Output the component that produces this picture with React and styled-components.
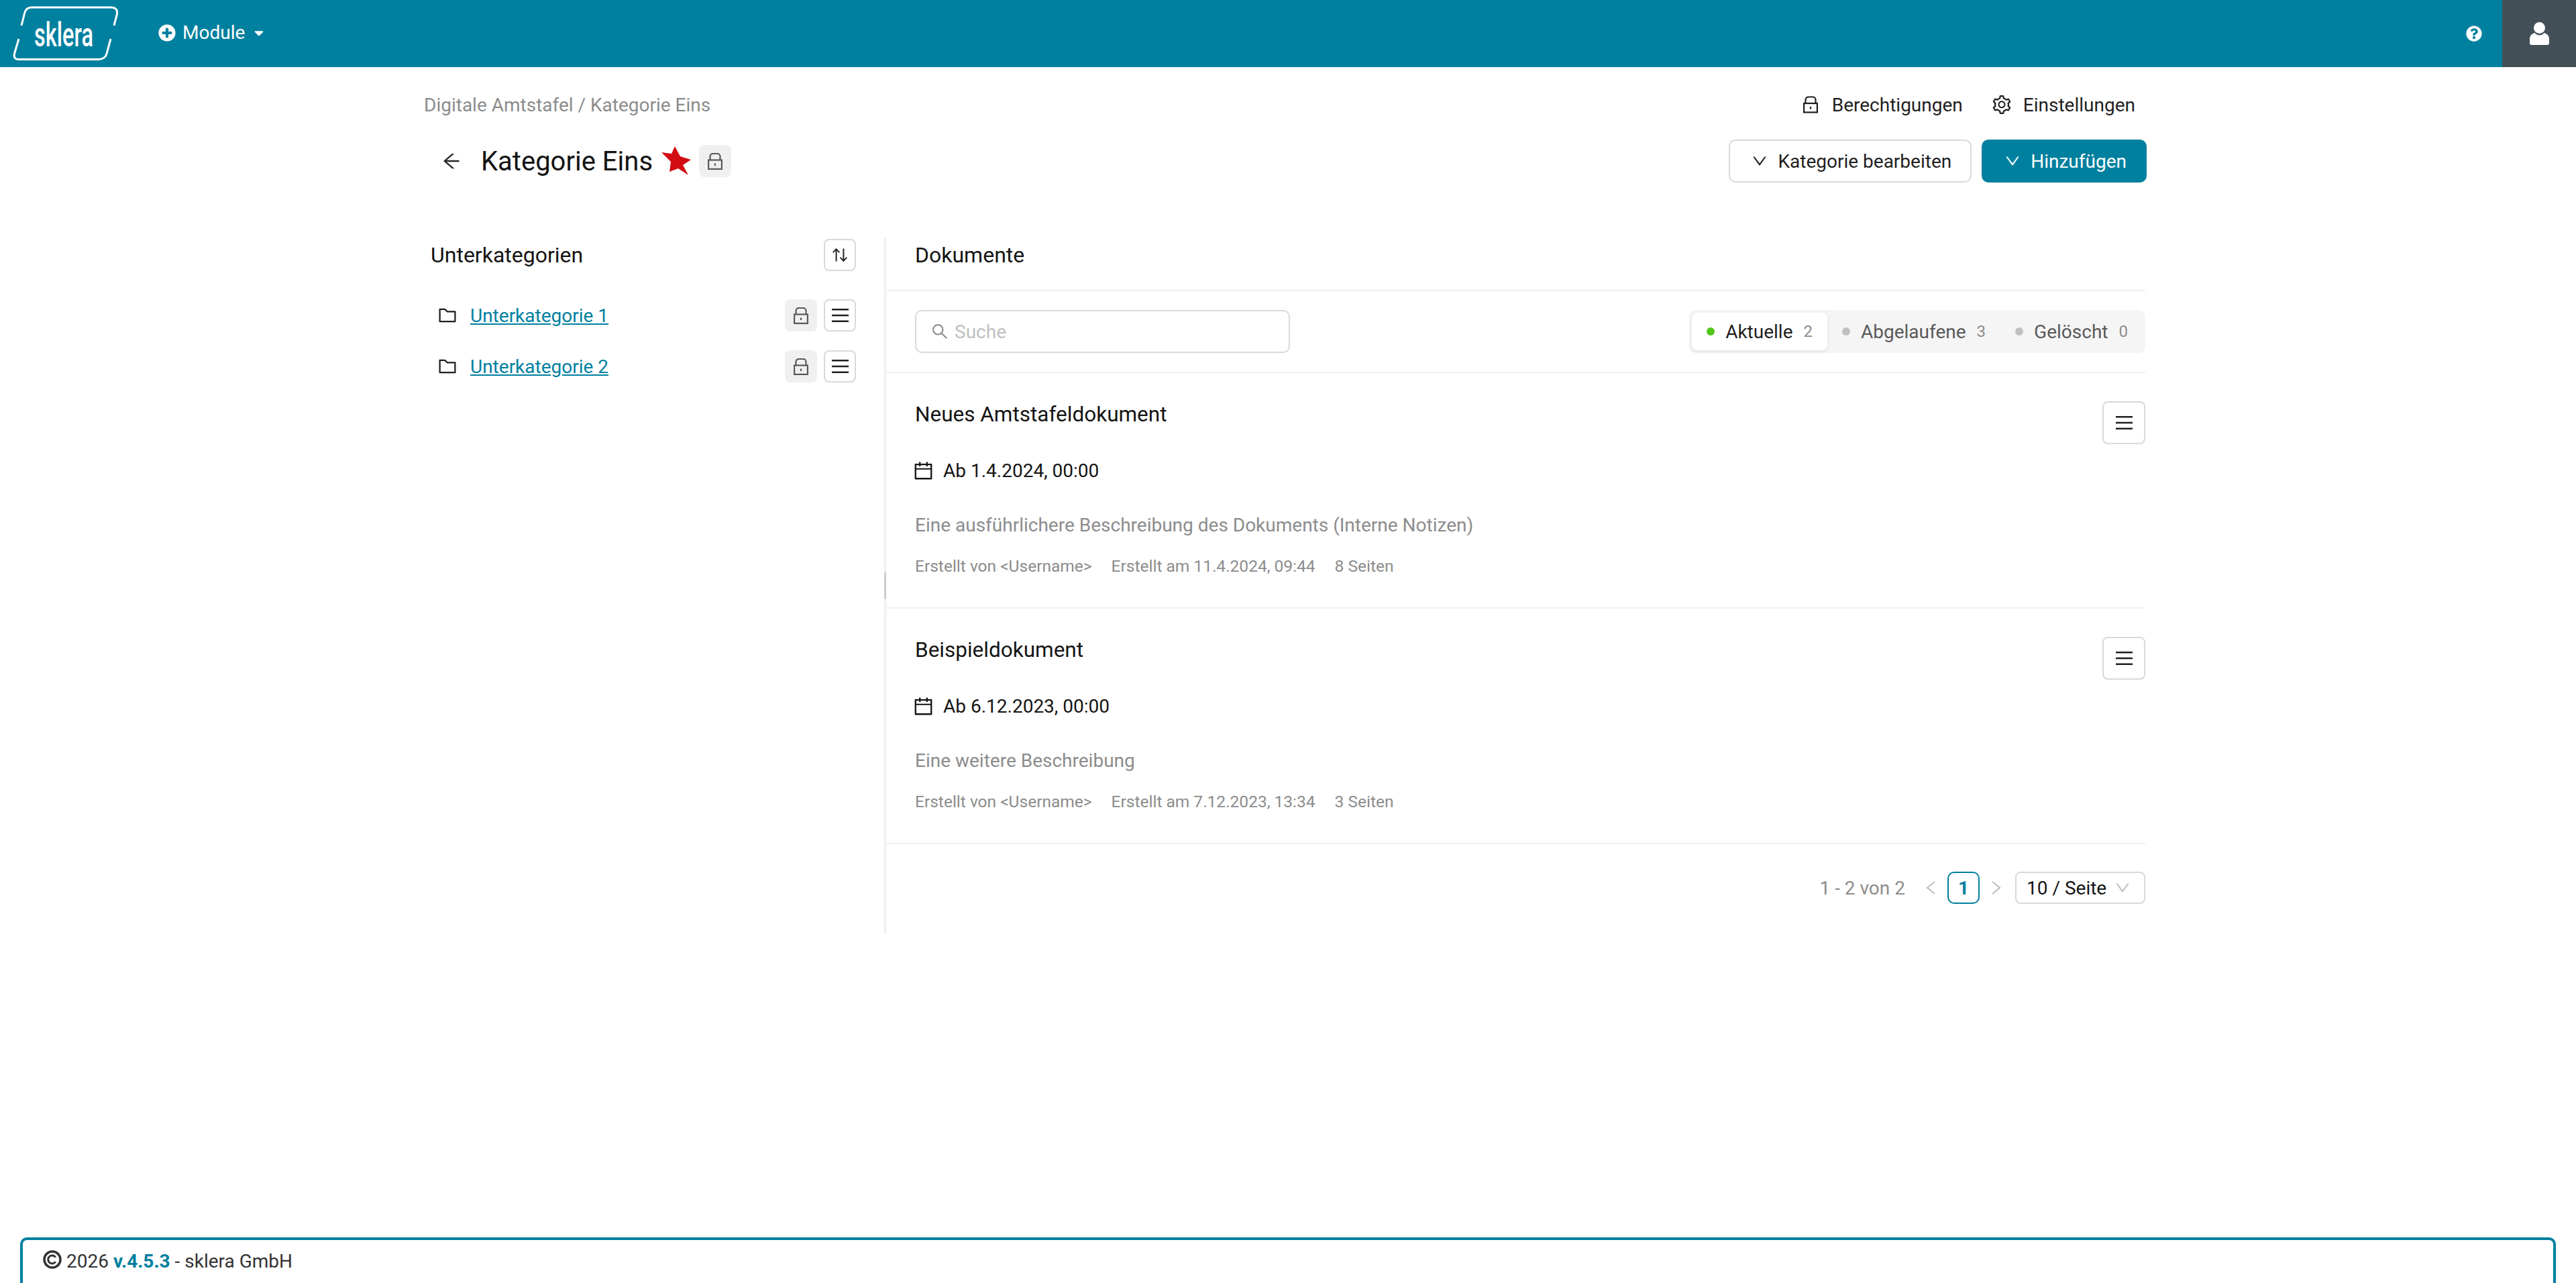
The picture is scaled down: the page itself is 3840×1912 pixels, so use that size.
import React from "react";
import styled, { createGlobalStyle } from "styled-components";
import {
  AiOutlineArrowLeft,
  AiOutlineCalendar,
  AiOutlineDown,
  AiOutlineFolder,
  AiOutlineSearch,
  AiOutlineSetting,
} from "react-icons/ai";
import { FaCaretDown, FaPlusCircle, FaQuestionCircle } from "react-icons/fa";
import { ArrowUpDown } from "lucide-react";

const TEAL = "#00809f";

const Global = createGlobalStyle`
  html, body { margin: 0; padding: 0; background: #fff; }
  body { font-family: Roboto, "Liberation Sans", sans-serif; color: #141414; overflow: hidden; }
  * { box-sizing: border-box; }
`;

const Page = styled.div`
  height: 1912px;
  display: flex;
  flex-direction: column;
  overflow: hidden;
`;

const TopBar = styled.header`
  height: 100px;
  flex: none;
  display: flex;
  align-items: center;
  background: ${TEAL};
  color: #fff;
`;
const LogoBox = styled.svg`
  width: 196px;
  height: 100px;
  flex: none;
  margin-right: 40px;
`;
const ModuleMenu = styled.div`
  display: flex;
  align-items: center;
  font-size: 28px;
  line-height: 32px;
  gap: 10px;
  margin-top: -2px;
`;
const Spacer = styled.div`
  flex: 1;
`;
const HelpSlot = styled.div`
  display: flex;
  font-size: 24px;
  margin-right: 30px;
  color: #fff;
`;
const UserCell = styled.div`
  width: 110px;
  height: 100px;
  background: #434f57;
  display: flex;
  align-items: center;
  justify-content: center;
`;

const Main = styled.main`
  flex: 1;
  width: 2568px;
  margin-left: 632px;
`;
const HeadTop = styled.div`
  height: 40px;
  margin-top: 36px;
  display: flex;
  align-items: center;
  justify-content: space-between;
`;
const Breadcrumb = styled.div`
  font-size: 28px;
  color: #8c8c8c;
`;
const HeadLinks = styled.div`
  display: flex;
  align-items: center;
  gap: 42px;
  margin-right: 17px;
`;
const HeadLink = styled.div`
  display: flex;
  align-items: center;
  gap: ${(p) => p.$gap}px;
  font-size: 28px;
  color: #1f1f1f;
  svg { flex: none; }
`;
const TitleRow = styled.div`
  height: 64px;
  margin-top: 32px;
  display: flex;
  align-items: center;
`;
const BackIcon = styled.span`
  display: flex;
  font-size: 32px;
  margin-left: 25px;
  margin-right: 28px;
  color: #262626;
`;
const Title = styled.h1`
  font-size: 40px;
  font-weight: 400;
  margin: 0 13px 0 0;
  color: #141414;
`;
const StarIcon = styled.svg`
  width: 44px;
  height: 44px;
  margin-right: 12px;
  flex: none;
`;
const LockTag = styled.span`
  width: 48px;
  height: 48px;
  background: #f0f0f0;
  border-radius: 8px;
  display: flex;
  align-items: center;
  justify-content: center;
  color: #595959;
  flex: none;
`;
const TitleActions = styled.div`
  margin-left: auto;
  display: flex;
  gap: 15px;
`;
const ActionButton = styled.button`
  height: 64px;
  padding: 0 28px 0 31px;
  display: flex;
  align-items: center;
  gap: 14px;
  font: 400 28px Roboto, sans-serif;
  border-radius: 10px;
  border: 2px solid ${(p) => (p.$primary ? TEAL : "#d9d9d9")};
  background: ${(p) => (p.$primary ? TEAL : "#fff")};
  color: ${(p) => (p.$primary ? "#fff" : "#1f1f1f")};
  svg { font-size: 26px; }
`;

const Body = styled.div`
  margin-top: 83px;
  display: grid;
  grid-template-columns: 688px 1fr;
  height: 1037px;
`;
const Sidebar = styled.aside`
  padding-right: 44px;
  position: relative;
`;
const SideHead = styled.div`
  height: 48px;
  display: flex;
  align-items: center;
  justify-content: space-between;
  padding-left: 10px;
  margin-top: 1px;
`;
const SectionTitle = styled.h2`
  font-size: 32px;
  font-weight: 400;
  margin: 0;
  color: #141414;
`;
const IconButton = styled.button`
  width: ${(p) => p.$size || 48}px;
  height: ${(p) => p.$size || 48}px;
  padding: 0;
  flex: none;
  display: flex;
  align-items: center;
  justify-content: center;
  background: #fff;
  border: 2px solid #d9d9d9;
  border-radius: 8px;
  color: #1f1f1f;
`;
const CatList = styled.div`
  margin-top: 42px;
  display: flex;
  flex-direction: column;
  gap: 28px;
`;
const CatRow = styled.div`
  height: 48px;
  display: flex;
  align-items: center;
  padding-left: 19px;
  gap: 10px;
`;
const FolderIcon = styled.span`
  display: flex;
  font-size: 32px;
  margin-right: 8px;
  color: #1f1f1f;
`;
const CatLink = styled.a`
  font-size: 28px;
  color: ${TEAL};
  text-decoration: underline;
  flex: 1;
`;
const Panel = styled.section`
  border-left: 3px solid #f0f0f0;
  margin-left: -2px;
  padding-right: 2px;
  position: relative;
`;
const Grip = styled.div`
  position: absolute;
  left: -3px;
  top: 498px;
  width: 3px;
  height: 40px;
  background: #cccccc;
`;
const PanelHead = styled.div`
  height: 79px;
  padding: 6px 0 0 43px;
  line-height: 38px;
  border-bottom: 2px solid #f0f0f0;
`;
const Toolbar = styled.div`
  height: 122px;
  padding: 0 0 0 43px;
  display: flex;
  align-items: center;
  justify-content: space-between;
  border-bottom: 2px solid #f0f0f0;
`;
const SearchBox = styled.div`
  width: 559px;
  height: 64px;
  border: 2px solid #d9d9d9;
  border-radius: 10px;
  display: flex;
  align-items: center;
  padding-left: 21px;
  gap: 8px;
  color: #8c8c8c;
  font-size: 28px;
`;
const Placeholder = styled.span`
  font-size: 28px;
  color: #bfbfbf;
`;
const Segments = styled.div`
  height: 64px;
  padding: 4px;
  border-radius: 10px;
  background: #f5f5f5;
  display: flex;
`;
const Segment = styled.div`
  height: 56px;
  display: flex;
  align-items: center;
  padding: 0 22px;
  border-radius: 8px;
  background: ${(p) => (p.$active ? "#fff" : "transparent")};
  box-shadow: ${(p) => (p.$active ? "0 2px 6px rgba(0,0,0,.09)" : "none")};
  color: ${(p) => (p.$active ? "#1f1f1f" : "#595959")};
  font-size: 28px;
`;
const Dot = styled.i`
  width: 12px;
  height: 12px;
  border-radius: 50%;
  background: ${(p) => p.$color};
  margin-right: 16px;
`;
const Count = styled.span`
  font-size: 24px;
  color: #8c8c8c;
  margin-left: 16px;
`;
const DocItem = styled.article`
  height: 351px;
  padding: 42px 0 0 43px;
  display: flex;
  justify-content: space-between;
  align-items: flex-start;
  border-bottom: 2px solid #f0f0f0;
`;
const DocInfo = styled.div`
  display: flex;
  flex-direction: column;
`;
const DocTitle = styled.h3`
  font-size: 31.5px;
  font-weight: 400;
  line-height: 38px;
  margin: 1px 0 0;
  color: #141414;
`;
const DocDate = styled.div`
  display: flex;
  align-items: center;
  gap: 13px;
  height: 36px;
  margin-top: 46px;
  font-size: 28px;
  color: #141414;
  svg { font-size: 33px; margin-left: -4px; }
`;
const DocDesc = styled.p`
  margin: 44px 0 0;
  line-height: 40px;
  font-size: 28px;
  color: #8c8c8c;
`;
const DocMeta = styled.div`
  margin-top: 25px;
  line-height: 32px;
  display: flex;
  gap: 29px;
  font-size: 24.5px;
  color: #8c8c8c;
`;
const Pagination = styled.nav`
  height: 48px;
  margin-top: 41px;
  display: flex;
  align-items: center;
  justify-content: flex-end;
`;
const PageTotal = styled.span`
  font-size: 28px;
  color: #8c8c8c;
  margin-right: 31px;
`;
const PageArrow = styled.svg`
  width: 14px;
  height: 20px;
  flex: none;
  fill: none;
  stroke: #bfbfbf;
  stroke-width: 2.2;
`;
const PageNumber = styled.span`
  width: 48px;
  height: 48px;
  margin: 0 18px;
  border: 2px solid ${TEAL};
  border-radius: 10px;
  color: ${TEAL};
  font-size: 28px;
  font-weight: 700;
  display: flex;
  align-items: center;
  justify-content: center;
`;
const PageSize = styled.div`
  width: 194px;
  height: 48px;
  margin-left: 21px;
  border: 2px solid #d9d9d9;
  border-radius: 8px;
  padding: 0 19px 0 15px;
  display: flex;
  align-items: center;
  justify-content: space-between;
  font-size: 28px;
  color: #141414;
  svg { font-size: 26px; color: #bfbfbf; }
`;

const Footer = styled.footer`
  flex: none;
  height: 68px;
  margin: 0 30px;
  padding: 14px 30px 0;
  border: 4px solid ${TEAL};
  border-bottom: 0;
  border-radius: 10px 10px 0 0;
  display: flex;
  align-items: flex-start;
  font-size: 28px;
  line-height: 36px;
  color: #333;
  gap: 7px;
`;
const FooterIcon = styled.svg`
  width: 28px;
  height: 28px;
  flex: none;
  margin-top: 1px;
  fill: none;
  stroke: #333;
`;
const Version = styled.b`
  color: ${TEAL};
  font-weight: 700;
`;

const Lock = ({ w = 22, h = 25 }) => (
  <svg width={w} height={h} viewBox="0 0 22 25" fill="none" stroke="currentColor" strokeWidth="2.2">
    <path d="M3.500 10V5a4 4 0 0 1 4-4h7a4 4 0 0 1 4 4v5" />
    <rect x="1.100" y="10.500" width="19.800" height="13.400" />
    <path d="M11 15.500v3.500" />
  </svg>
);

const Hamburger = () => (
  <svg width="25" height="20" viewBox="0 0 25 20" stroke="#1f1f1f" strokeWidth="2.400">
    <path d="M0 1.200H25M0 10H25M0 18.800H25" />
  </svg>
);

const UserGlyph = () => (
  <svg width="29" height="34" viewBox="0 0 29 34" fill="#fff">
    <circle cx="14.500" cy="8.500" r="8.500" />
    <path d="M0 31V25C0 20 3.500 17 7.500 16C9.500 18.500 12 19.500 14.500 19.500C17 19.500 19.500 18.500 21.500 16C25.500 17 29 20 29 25V31Q29 34 26 34H3Q0 34 0 31Z" />
  </svg>
);

const Logo = () => (
  <LogoBox viewBox="0 0 196 100" aria-label="sklera">
    <path
      d="M32 38 L36.500 20 Q38.500 11 47 11 H165 Q176 11 174.500 21 L170 38 M28 58 L21.500 80 Q19.500 88.500 28 88.500 H146 Q157 88.500 159 80 L165 58"
      fill="none"
      stroke="#fff"
      strokeWidth="3"
    />
    <text x="51" y="69" fontFamily="Roboto, sans-serif" fontSize="50" fontWeight="500" fill="#fff" textLength="88" lengthAdjust="spacingAndGlyphs">
      sklera
    </text>
  </LogoBox>
);

const docs = [
  { title: "Neues Amtstafeldokument", date: "Ab 1.4.2024, 00:00", desc: "Eine ausführlichere Beschreibung des Dokuments (Interne Notizen)", created: "Erstellt am 11.4.2024, 09:44", pages: "8 Seiten" },
  { title: "Beispieldokument", date: "Ab 6.12.2023, 00:00", desc: "Eine weitere Beschreibung", created: "Erstellt am 7.12.2023, 13:34", pages: "3 Seiten" },
];
const cats = ["Unterkategorie 1", "Unterkategorie 2"];
const segs = [
  { label: "Aktuelle", n: 2, color: "#52c41a", active: true },
  { label: "Abgelaufene", n: 3, color: "#bfbfbf" },
  { label: "Gelöscht", n: 0, color: "#bfbfbf" },
];

export default function App() {
  return (
    <Page>
      <Global />
      <TopBar>
        <Logo />
        <ModuleMenu>
          <FaPlusCircle size={26} />
          Module
          <FaCaretDown size={22} />
        </ModuleMenu>
        <Spacer />
        <HelpSlot><FaQuestionCircle /></HelpSlot>
        <UserCell><UserGlyph /></UserCell>
      </TopBar>
      <Main>
        <HeadTop>
          <Breadcrumb>Digitale Amtstafel / Kategorie Eins</Breadcrumb>
          <HeadLinks>
            <HeadLink $gap={21}><Lock w={22} h={26} />Berechtigungen</HeadLink>
            <HeadLink $gap={16}><AiOutlineSetting size={32} />Einstellungen</HeadLink>
          </HeadLinks>
        </HeadTop>
        <TitleRow>
          <BackIcon><AiOutlineArrowLeft /></BackIcon>
          <Title>Kategorie Eins</Title>
          <StarIcon viewBox="0 0 44 44">
            <polygon points="20,0 28,15 44,20 32,28 40,43 25,33 12,38 14,23 0,9 15,11" fill="#d30c14" />
          </StarIcon>
          <LockTag><Lock /></LockTag>
          <TitleActions>
            <ActionButton><AiOutlineDown />Kategorie bearbeiten</ActionButton>
            <ActionButton $primary><AiOutlineDown />Hinzufügen</ActionButton>
          </TitleActions>
        </TitleRow>
        <Body>
          <Sidebar>
            <SideHead>
              <SectionTitle>Unterkategorien</SectionTitle>
              <IconButton><ArrowUpDown size={26} strokeWidth={1.8} /></IconButton>
            </SideHead>
            <CatList>
              {cats.map((c) => (
                <CatRow key={c}>
                  <FolderIcon><AiOutlineFolder /></FolderIcon>
                  <CatLink>{c}</CatLink>
                  <LockTag><Lock /></LockTag>
                  <IconButton><Hamburger /></IconButton>
                </CatRow>
              ))}
            </CatList>
          </Sidebar>
          <Panel>
            <Grip />
            <PanelHead><SectionTitle>Dokumente</SectionTitle></PanelHead>
            <Toolbar>
              <SearchBox>
                <AiOutlineSearch />
                <Placeholder>Suche</Placeholder>
              </SearchBox>
              <Segments>
                {segs.map((s) => (
                  <Segment key={s.label} $active={s.active}>
                    <Dot $color={s.color} />
                    {s.label}
                    <Count>{s.n}</Count>
                  </Segment>
                ))}
              </Segments>
            </Toolbar>
            {docs.map((d) => (
              <DocItem key={d.title}>
                <DocInfo>
                  <DocTitle>{d.title}</DocTitle>
                  <DocDate><AiOutlineCalendar />{d.date}</DocDate>
                  <DocDesc>{d.desc}</DocDesc>
                  <DocMeta>
                    <span>Erstellt von &lt;Username&gt;</span>
                    <span>{d.created}</span>
                    <span>{d.pages}</span>
                  </DocMeta>
                </DocInfo>
                <IconButton $size={64}><Hamburger /></IconButton>
              </DocItem>
            ))}
            <Pagination>
              <PageTotal>1 - 2 von 2</PageTotal>
              <PageArrow viewBox="0 0 14 20"><path d="M13 1 2 10 13 19" /></PageArrow>
              <PageNumber>1</PageNumber>
              <PageArrow viewBox="0 0 14 20"><path d="M1 1 12 10 1 19" /></PageArrow>
              <PageSize>10 / Seite<AiOutlineDown /></PageSize>
            </Pagination>
          </Panel>
        </Body>
      </Main>
      <Footer>
        <FooterIcon viewBox="0 0 28 28">
          <circle cx="14" cy="14" r="12" strokeWidth="3.500" />
          <path d="M18.800 10.800A6 6 0 1 0 18.800 17.200" strokeWidth="3" />
        </FooterIcon>
        <span>2026 <Version>v.4.5.3</Version> - sklera GmbH</span>
      </Footer>
    </Page>
  );
}
